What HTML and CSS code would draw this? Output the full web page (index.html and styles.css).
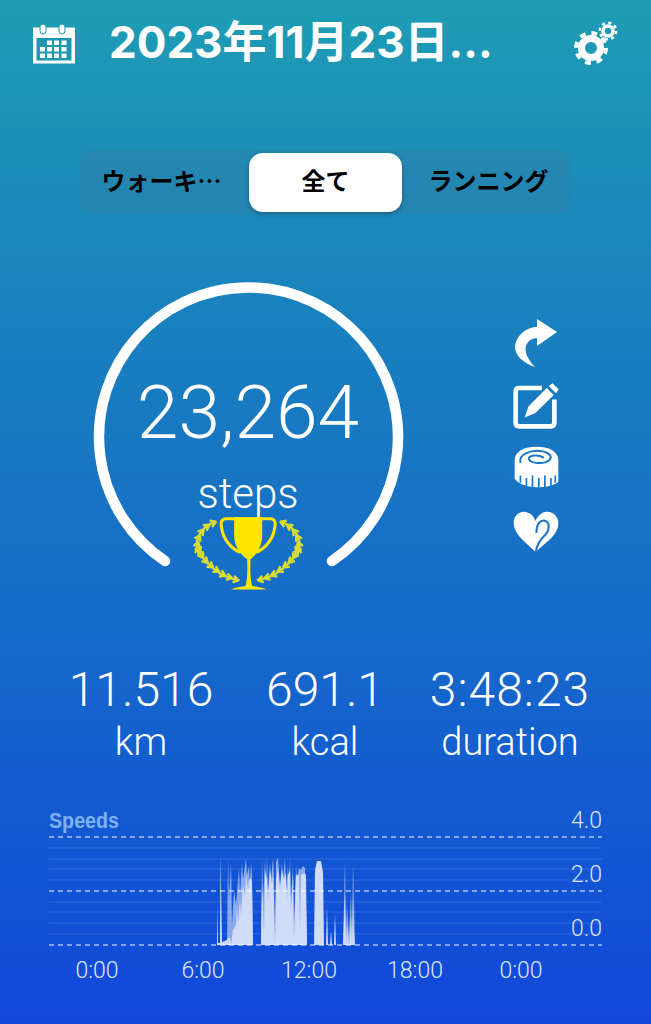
FILE: index.html
```html
<!DOCTYPE html>
<html lang="ja">
<head>
  <meta charset="UTF-8">
  <meta name="viewport" content="width=device-width, initial-scale=1.0">
  <title>歩数計</title>
  <link rel="stylesheet" href="styles.css">
</head>
<body>
  <div class="page">
    <!-- ヘッダー -->
    <header class="top-bar">
      <svg class="icon-calendar" viewBox="33 24 42 40">
        <rect x="33" y="27.500" width="42" height="36" fill="#fff"/>
        <rect x="36.500" y="38" width="35" height="22.500" fill="#1e98b2"/>
        <rect x="40" y="24" width="6" height="10" rx="3" fill="#fff" stroke="#1e98b2"/>
        <rect x="59" y="24" width="6" height="10" rx="3" fill="#fff" stroke="#1e98b2"/>
        <g fill="#fff">
          <rect x="47" y="40.500" width="5" height="4.500"/><rect x="54" y="40.500" width="5" height="4.500"/><rect x="61.500" y="40.500" width="5" height="4.500"/>
          <rect x="40" y="47" width="5" height="4.500"/><rect x="47" y="47" width="5" height="4.500"/><rect x="54" y="47" width="5" height="4.500"/><rect x="61.500" y="47" width="5" height="4.500"/>
          <rect x="40" y="53.500" width="5" height="4.500"/><rect x="47" y="53.500" width="5" height="4.500"/><rect x="54" y="53.500" width="5" height="4.500"/><rect x="61.500" y="53.500" width="5" height="4.500"/>
        </g>
      </svg>
      <h1 class="date-title">2023年11月23日...</h1>
      <svg class="icon-gears" viewBox="574 21 44 46" fill="none" stroke="#fff">
        <circle cx="591" cy="48" r="9.500" stroke-width="7"/>
        <circle cx="591" cy="48" r="15" stroke-width="4" stroke-dasharray="5.800 5.980"/>
        <circle cx="608" cy="31" r="5" stroke-width="3.600"/>
        <circle cx="608" cy="31" r="8.200" stroke-width="2.400" stroke-dasharray="3.200 3.240"/>
      </svg>
    </header>

    <!-- 切り替え -->
    <div class="segment">
      <div class="seg-item">ウォーキ…</div>
      <div class="seg-item seg-active">全て</div>
      <div class="seg-item">ランニング</div>
    </div>

    <!-- メーター -->
    <section class="main-row">
      <div class="gauge">
        <svg class="gauge-ring" viewBox="93 282 310 290" fill="none">
          <path d="M165 561 A149.500 149.500 0 1 1 332 561" stroke="#fff" stroke-width="10.500" stroke-linecap="round"/>
        </svg>
        <div class="gauge-text">
          <div class="steps-num">23,264</div>
          <div class="steps-label">steps</div>
          <svg class="trophy" viewBox="60 50 350 230">
            <defs>
              <path id="leaf" d="M0 0L-17-10M0 0L-17 10M2 0H-22" fill="none" stroke="#d8dc34" stroke-width="7"/>
              <g id="wreath">
                <use href="#leaf" transform="translate(138 70) rotate(-22)"/>
                <use href="#leaf" transform="translate(118 79) rotate(-35)"/>
                <use href="#leaf" transform="translate(101 93) rotate(-50)"/>
                <use href="#leaf" transform="translate(90 110) rotate(-62)"/>
                <use href="#leaf" transform="translate(84 129) rotate(-78)"/>
                <use href="#leaf" transform="translate(84 146) rotate(-92)"/>
                <use href="#leaf" transform="translate(90 162) rotate(68)"/>
                <use href="#leaf" transform="translate(100 178) rotate(55)"/>
                <use href="#leaf" transform="translate(113 193) rotate(45)"/>
                <use href="#leaf" transform="translate(129 207) rotate(38)"/>
                <use href="#leaf" transform="translate(147 220) rotate(30)"/>
                <use href="#leaf" transform="translate(166 231) rotate(22)"/>
                <use href="#leaf" transform="translate(186 239) rotate(16)"/>
                <use href="#leaf" transform="translate(206 245) rotate(12)"/>
              </g>
            </defs>
            <use href="#wreath"/>
            <use href="#wreath" transform="matrix(-1 0 0 1 468 0)"/>
            <path fill="none" stroke="#ffe400" stroke-width="9" d="M195 61H168Q150 61 154 85C158 120 180 148 210 162M275 61H300Q318 61 314 85C310 120 288 148 258 162"/>
            <path fill="#ffe600" d="M192 56H276V110C276 145 258 170 241 182C240 215 240 240 246 262C260 265 278 266 288 273H182C192 266 212 265 226 262C232 240 232 215 231 182C212 170 192 145 192 110Z"/>
          </svg>
        </div>
      </div>
      <div class="side-icons">
        <svg class="side-icon icon-share" viewBox="34 18 44 50"><path fill="#fff" d="M57 19L77 32L57 46V38C46 39 39 50 55 67C40 62 35 53 35 47C36 35 47 27 57 27Z"/></svg>
        <svg class="side-icon icon-edit" viewBox="100 250 145 142">
          <path fill="none" stroke="#fff" stroke-width="14" d="M190 265H122Q111 265 111 276V370Q111 381 122 381H217Q228 381 228 370V300"/>
          <path fill="#fff" d="M138 354L150 320L205 265L226 286L171 341ZM211 259L222 251L241 269L233 281Z"/>
        </svg>
        <svg class="side-icon icon-tape" viewBox="103 443 134 124">
          <path fill="#fff" d="M105 485C105 458 135 445 170 445C205 445 235 458 235 485V548C225 560 200 565 170 565C140 565 115 555 105 540Z"/>
          <path fill="none" stroke="#1877c6" stroke-width="6" stroke-linecap="round" d="M122 490C118 468 150 455 180 457C205 459 220 472 208 485C192 498 150 495 147 480C146 470 175 467 190 476"/>
          <path fill="none" stroke="#1877c6" stroke-width="5" d="M122 552V530M140 565V538M158 565V530M177 565V538M195 565V530M213 565V538M226 552V530"/>
        </svg>
        <svg class="side-icon icon-heart" viewBox="103 633 137 126">
          <path fill="#fff" d="M170 757C130 720 105 700 105 670C105 647 125 635 140 638C155 640 165 650 170 665C175 650 190 636 205 637C225 638 238 652 238 672C238 705 205 725 170 757Z"/>
          <path fill="none" stroke="#1a72c9" stroke-width="6" d="M173 700C172 675 185 660 198 664C215 670 212 695 195 710C180 725 173 740 171 757"/>
        </svg>
      </div>
    </section>

    <!-- 距離・カロリー・時間 -->
    <section class="stats">
      <div class="stat stat-km"><div class="stat-num">11.516</div><div class="stat-unit">km</div></div>
      <div class="stat stat-kcal"><div class="stat-num">691.1</div><div class="stat-unit">kcal</div></div>
      <div class="stat stat-time"><div class="stat-num">3:48:23</div><div class="stat-unit">duration</div></div>
    </section>

    <!-- スピードのグラフ -->
    <section class="chart">
      <svg class="chart-svg" viewBox="40 805 570 145">
        <text class="chart-title" x="49" y="828" textLength="70" lengthAdjust="spacingAndGlyphs">Speeds</text>
        <text class="chart-y" x="602" y="828">4.0</text>
        <text class="chart-y" x="602" y="882">2.0</text>
        <text class="chart-y" x="602" y="936">0.0</text>
        <g stroke="#fff" stroke-opacity=".13">
          <path d="M49 848H602M49 859H602M49 869H602M49 880H602M49 902H602M49 912H602M49 923H602M49 934H602"/>
        </g>
        <!-- 薄いスパイク -->
        <path fill="#a9c0f2" fill-opacity=".8" d="M227 945L228 858L229 900L231 863L232 925L234 890L236 905L238 880L239 868L240 895L242 862L243 880L245 866L246 858L247 875L249 866L250 885L251 862L252 875L253 945ZM261 945L262 857L263 900L265 860L266 885L267 858L268 890L270 862L271 880L273 858L274 878L275 945L276 862L278 858L280 885L282 862L283 880L285 858L286 895L288 865L289 890L290 858L291 900L293 866L294 925L296 866L297 880L299 868L301 870L303 866L305 868L307 945ZM343 945L345 860L346 930L347 905L349 935L351 893L352 935L353 862L355 945Z"/>
        <!-- 濃い部分 -->
        <path fill="#cfdbf7" d="M217 945V906L218 943H220L220.500 854L222 942L227 940L228 938H230L231 944L233 930L236 925L237 905L238 925L240 900L241 915L243 885L245 895L246 875L248 890L249 880L251 878L252 885L253 945ZM261 945L262 880L264 935L265 870L267 880L268 900L270 870L272 885L273 875L274 900L275 945L276 880L278 868L280 890L282 870L284 880L286 872L287 900L288 875L290 870L291 910L293 875L294 940L296 875L299 875L300 930L301 875L304 873L306 875L307 945ZM314 945L315 870L317 861L321 861L323 872L324 945ZM326 945L327 906L328 945ZM330 945L331 931L332 945ZM334 945L335 913L336 945ZM343 945L345 895L346 945L347 925L349 945L351 915L352 945L353 900L354 932L355 945Z"/>
        <path fill="none" stroke="#fff" stroke-opacity=".65" stroke-width="1.300" stroke-dasharray="5 4" d="M49 837H602M49 891H602M49 945H602"/>
      </svg>
      <div class="time-axis">
        <span>0:00</span><span>6:00</span><span>12:00</span><span>18:00</span><span>0:00</span>
      </div>
    </section>
  </div>
</body>
</html>
```

FILE: styles.css
```css
html, body {
  margin: 0;
  padding: 0;
}
body {
  font-family: Roboto, "Noto Sans CJK JP", sans-serif;
  color: #fff;
}
.page {
  width: 651px;
  height: 1024px;
  overflow: hidden;
  background: linear-gradient(to bottom, #1f9db4 0%, #1a88bb 22%, #1569c9 62%, #1147da 100%);
}
/* ヘッダー */
.top-bar {
  display: flex;
  align-items: center;
  height: 88px;
  padding: 0 33px;
}
.icon-calendar {
  width: 42px;
  height: 40px;
}
.date-title {
  margin: -11px 0 0 34px;
  font-family: Inter, "Noto Sans CJK JP", sans-serif;
  font-size: 44px;
  font-weight: 700;
  white-space: nowrap;
}
.icon-gears {
  width: 44px;
  height: 46px;
  margin-left: auto;
}
/* 切り替え */
.segment {
  display: flex;
  align-items: center;
  width: 490px;
  height: 64px;
  margin: 62px 0 0 80px;
  border-radius: 12px;
  background-color: rgba(90, 100, 130, 0.14);
}
.seg-item {
  flex: 1;
  height: 59px;
  text-align: center;
  color: #000;
  font-family: "Noto Sans CJK JP", sans-serif;
  font-size: 24px;
  font-weight: 700;
  line-height: 54px;
}
.seg-item:first-child {
  padding-right: 6px;
}
.seg-item:last-child {
  padding-left: 5px;
}
.seg-active {
  flex: 0 0 153px;
  background-color: #fff;
  border-radius: 14px;
  box-shadow: 0 2px 5px rgba(0, 0, 0, 0.25);
}
/* メーター */
.main-row {
  display: flex;
  margin: 68px 0 0 93px;
  height: 311px;
}
.gauge {
  display: grid;
  width: 310px;
  height: 311px;
}
.gauge-ring, .gauge-text {
  grid-area: 1 / 1;
}
.gauge-ring {
  width: 310px;
  height: 290px;
  overflow: visible;
}
.gauge-text {
  display: flex;
  flex-direction: column;
  align-items: center;
}
.steps-num {
  margin-top: 90px;
  font-size: 75px;
  font-weight: 300;
  line-height: 80px;
}
.steps-label {
  margin-top: 22px;
  font-size: 42px;
  font-weight: 300;
  line-height: 40px;
}
.trophy {
  width: 117px;
  height: 77px;
  margin-top: 1px;
}
.side-icons {
  display: flex;
  flex-direction: column;
  align-items: center;
  gap: 18px;
  width: 50px;
  margin: 36px 0 0 108px;
}
.icon-share { width: 44px; height: 50px; }
.icon-edit { width: 48px; height: 47px; margin-top: -3px; }
.icon-tape { width: 45px; height: 42px; margin-top: -2px; }
.icon-heart { width: 46px; height: 43px; margin-top: 4px; }
/* 距離など */
.stats {
  display: grid;
  grid-template-columns: 184px 184px 186px;
  margin: 69px 0 0 49px;
  text-align: center;
  font-weight: 300;
}
.stat-num {
  font-size: 48px;
  line-height: 56px;
}
.stat-time .stat-num {
  letter-spacing: 1px;
}
.stat-unit {
  font-size: 38px;
  line-height: 48px;
}
/* グラフ */
.chart {
  margin: 39px 0 0 40px;
}
.chart-svg {
  display: block;
  width: 570px;
  height: 145px;
}
.chart-title {
  font-family: "Liberation Sans", sans-serif;
  font-size: 22px;
  font-weight: 700;
  fill: #7fb0f2;
}
.chart-y {
  font-size: 23px;
  font-weight: 300;
  fill: #dbe6fb;
  text-anchor: end;
}
.time-axis {
  display: flex;
  margin: 7px 0 0 4px;
  color: #dbe6fb;
  font-size: 23px;
  font-weight: 300;
}
.time-axis span {
  width: 106px;
  text-align: center;
}
```
